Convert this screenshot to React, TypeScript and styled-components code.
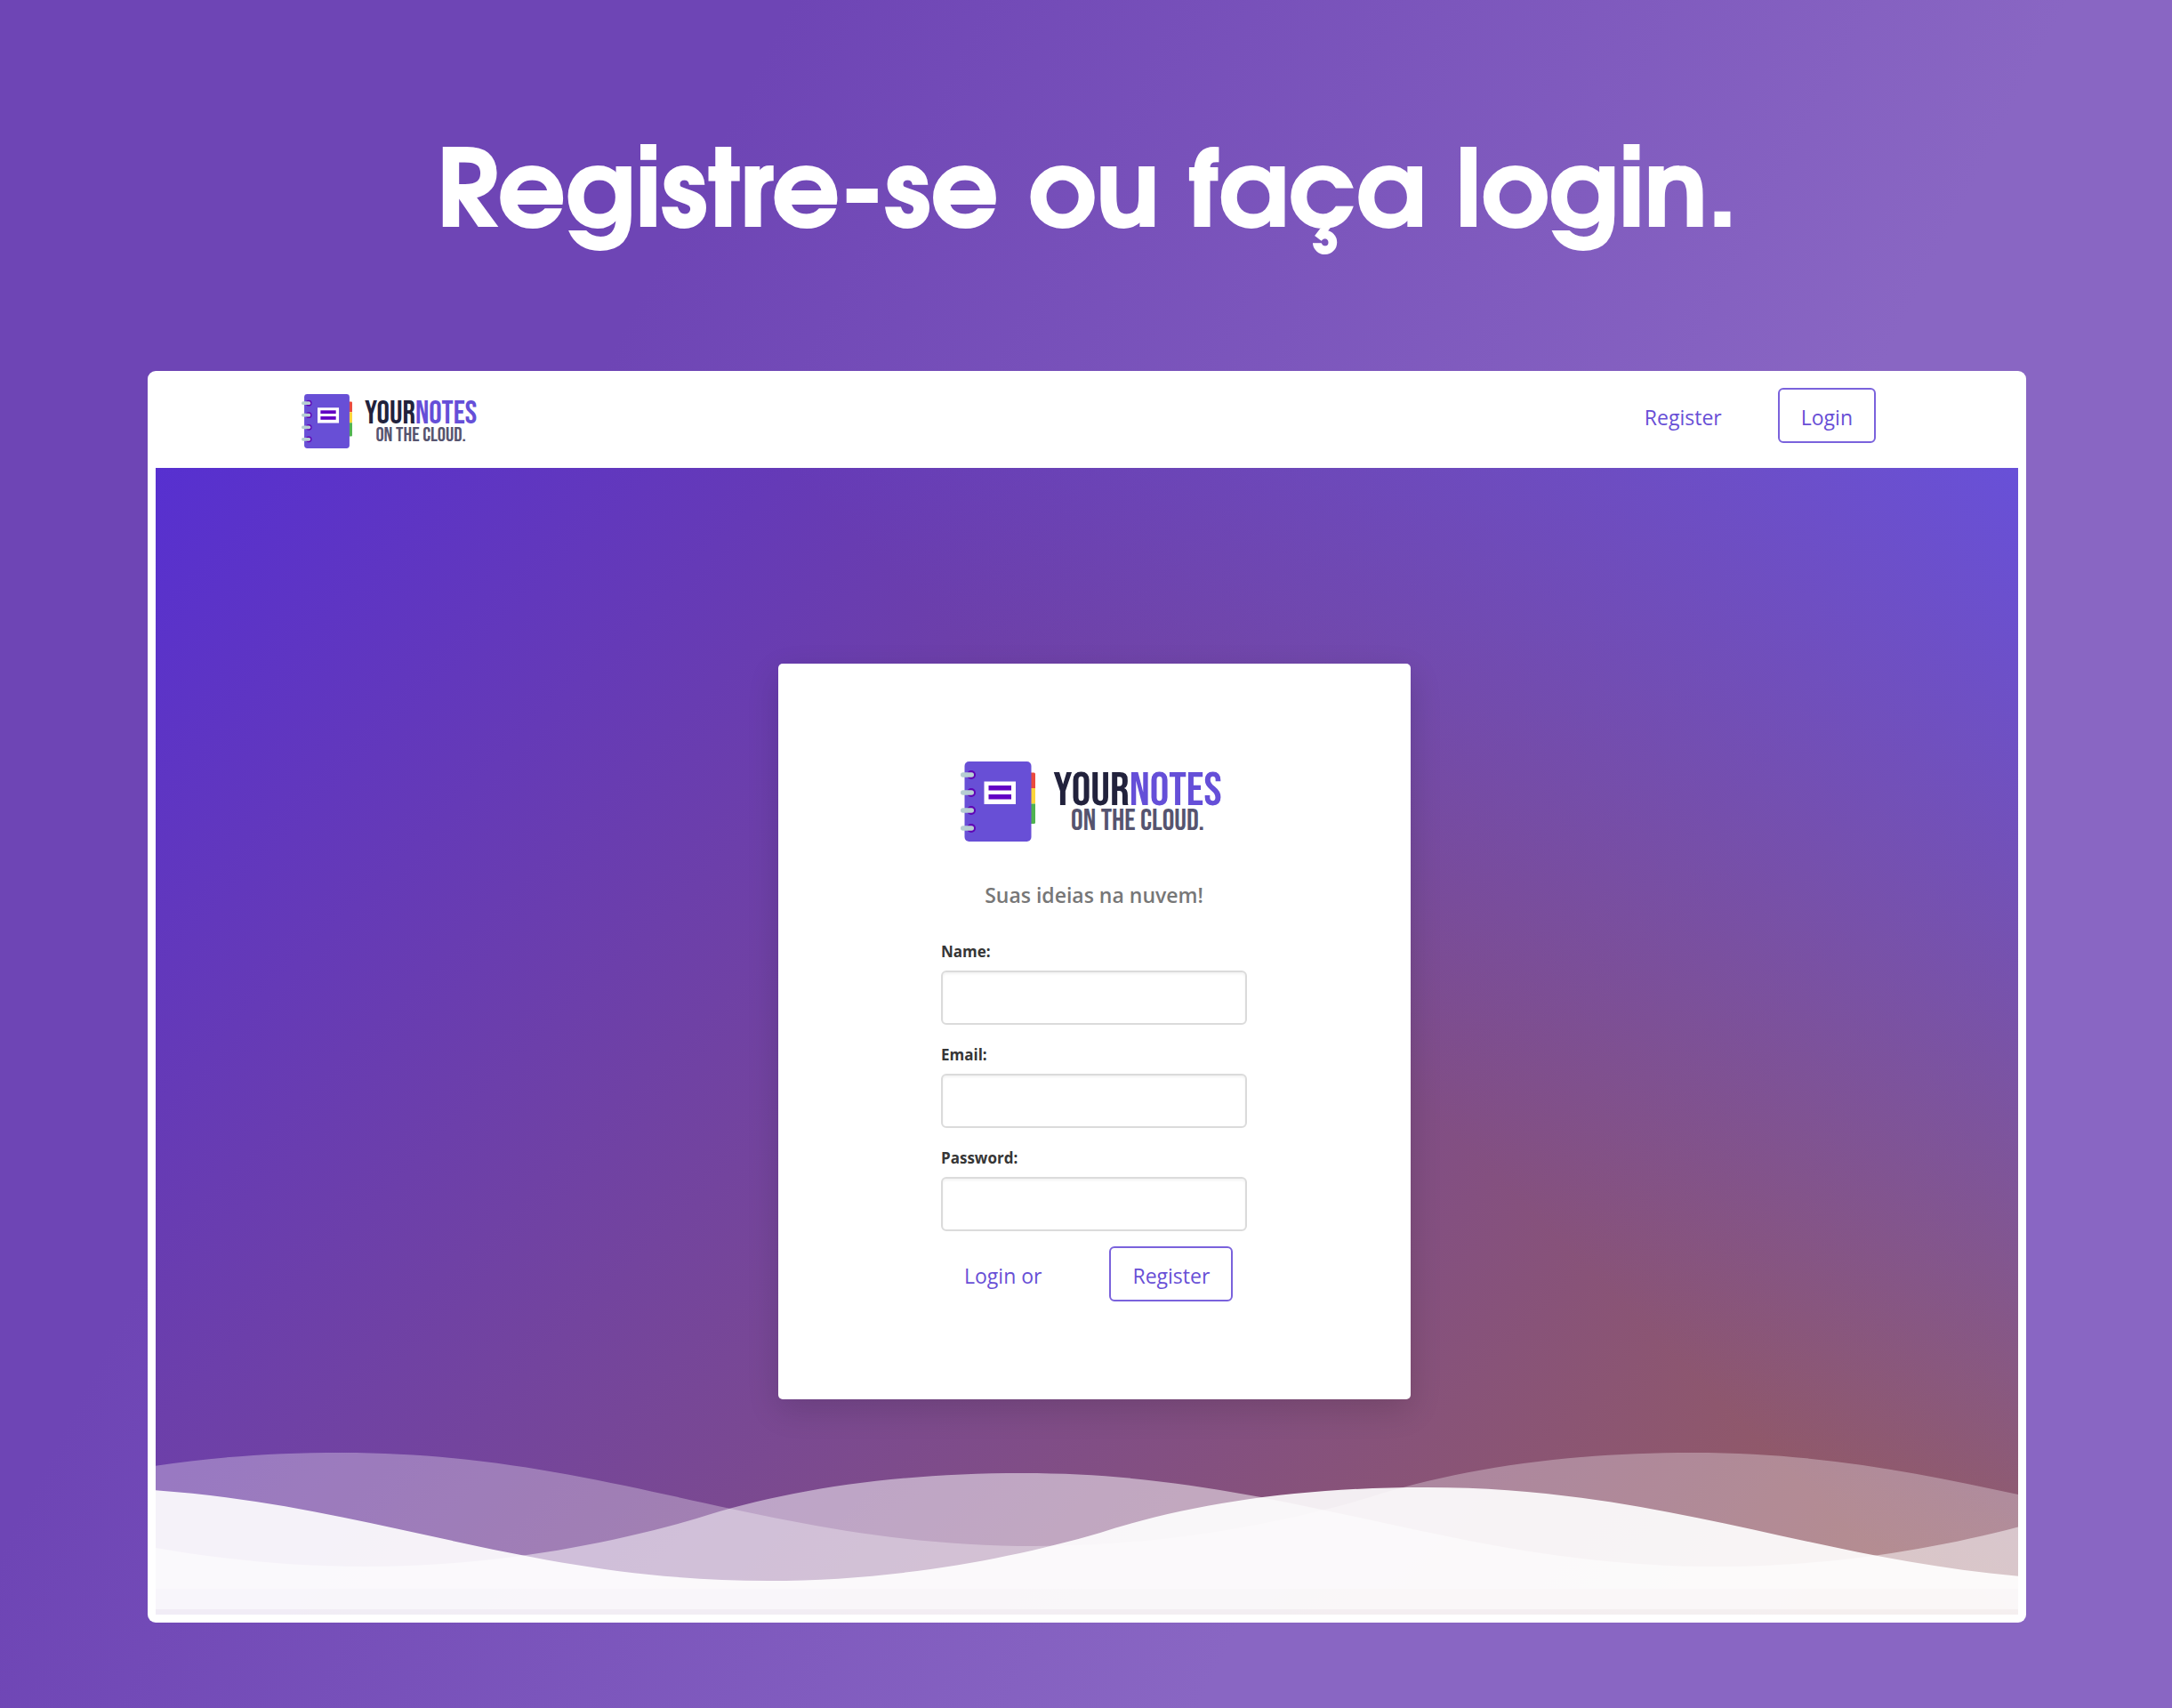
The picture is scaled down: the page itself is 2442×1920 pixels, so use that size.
import React from "react";
import styled, { createGlobalStyle } from "styled-components";

const violet = "#684fd6";

const GlobalStyle = createGlobalStyle`
  *, *::before, *::after { box-sizing: border-box; }
  body {
    margin: 0;
    font-family: "Segoe UI", "Open Sans", "Noto Sans", sans-serif;
    color: #212529;
  }
`;

const Page = styled.main`
  min-height: 100vh;
  display: flex;
  flex-direction: column;
  padding: 145px 164px 96px 166px;
  background: linear-gradient(117deg, #6e45b5 26%, #8966c3 68%);
`;

const Headline = styled.h1`
  margin: 0 0 120px;
  font: 700 119px/152px "Century Gothic", "TeX Gyre Adventor", "Poppins", sans-serif;
  color: #fff;
  -webkit-text-stroke: 2px #fff;
  text-align: center;
`;

const Window = styled.div`
  padding: 0 9px 9px;
  border-radius: 9px;
  background: #fff;
`;

const Navbar = styled.header`
  display: flex;
  align-items: flex-start;
  justify-content: space-between;
  padding: 19px 160px 22px 164px;
`;

const NavLogo = styled.a`
  padding-top: 7px;
  text-decoration: none;
`;

const NavActions = styled.nav`
  display: flex;
  gap: 37px;
`;

const Button = styled.button<{ $outlined?: boolean }>`
  height: 62px;
  padding: 4px 24px 0;
  border: 2px solid ${(p) => (p.$outlined ? "#7a62dc" : "transparent")};
  border-radius: 6px;
  background: transparent;
  color: ${violet};
  font: inherit;
  font-size: 23px;
  line-height: 32px;
  cursor: pointer;
`;

const Hero = styled.section`
  position: relative;
  display: flex;
  justify-content: center;
  padding: 220px 0 242px 17px;
  background:
    linear-gradient(225deg, #6850d8 0%, rgba(104, 80, 216, 0) 41%),
    linear-gradient(135deg, #5730d0, #995f5a);
`;

const WaveArt = styled.svg`
  position: absolute;
  left: 0;
  bottom: 0;
  width: 100%;
  height: 190px;
`;

const Card = styled.form`
  position: relative;
  display: flex;
  flex-direction: column;
  width: 711px;
  padding: 110px 184px 110px 183px;
  border-radius: 5px;
  background: #fff;
  box-shadow: 0 12px 36px rgba(0, 0, 0, 0.14);
`;

const CardLogo = styled.div`
  display: flex;
  justify-content: center;
  padding-right: 6px;
`;

const Tagline = styled.p`
  margin: 44px 0 36px;
  font-size: 23px;
  line-height: 32px;
  font-weight: 600;
  color: #777;
  text-align: center;
`;

const Field = styled.div`
  display: flex;
  flex-direction: column;
  gap: 9px;
  margin-bottom: 22px;

  &:last-of-type { margin-bottom: 0; }
`;

const Label = styled.label`
  font-size: 17px;
  line-height: 24px;
  font-weight: 700;
  color: #363636;
`;

const TextInput = styled.input`
  width: 100%;
  height: 61px;
  padding: 0 16px;
  border: 2px solid #dbdbdb;
  border-radius: 6px;
  box-shadow: inset 0 2px 3px rgba(10, 10, 10, 0.05);
  font: inherit;
  font-size: 23px;
`;

const Fields = styled.div`
  margin-bottom: 17px;
`;

const Actions = styled.div`
  display: flex;
  gap: 50px;
`;

const LogoRow = styled.span<{ $large?: boolean }>`
  display: flex;
  align-items: flex-start;
  gap: ${(p) => (p.$large ? 20 : 14)}px;
  font-family: "Bebas Neue", "Oswald", sans-serif;
  text-align: center;
`;

const BookIcon = styled.svg<{ $large?: boolean }>`
  flex: none;
  width: ${(p) => (p.$large ? 84 : 57)}px;
  height: ${(p) => (p.$large ? 90 : 61)}px;
`;

const Wordmark = styled.span<{ $large?: boolean }>`
  display: flex;
  flex-direction: column;
  padding-top: ${(p) => (p.$large ? 12 : 9)}px;
`;

const BrandName = styled.span<{ $large?: boolean }>`
  font-size: ${(p) => (p.$large ? 54 : 36)}px;
  line-height: ${(p) => (p.$large ? 42 : 28)}px;
  color: #22223c;
`;

const BrandAccent = styled.span`
  color: #654fd8;
`;

const BrandLine = styled.span<{ $large?: boolean }>`
  font-size: ${(p) => (p.$large ? 34 : 23)}px;
  line-height: ${(p) => (p.$large ? 26 : 18)}px;
  color: #56546f;
`;

const ringRows = [15, 35, 55, 75];

function Logo({ large }: { large?: boolean }) {
  return (
    <LogoRow $large={large}>
      <BookIcon $large={large} viewBox="0 0 84 90" aria-hidden="true">
        <path d="M78 12.5h4.5q1.5 0 1.5 1.5v16h-6z" fill="#ea4a3d" />
        <path d="M78 30h6v17.500h-6z" fill="#fcd53a" />
        <path d="M78 47.500h6v21q0 1.500-1.500 1.500h-4.500z" fill="#4fb350" />
        <rect x="4.500" width="75" height="90" rx="5" fill="#684fd6" />
        {ringRows.map((y) => (
          <g key={y}>
            <circle cx="12" cy={y} r="5" fill="#5f04b6" />
            <rect x="0" y={y - 2.75} width="15" height="5.500" rx="2.750" fill="#b7cfd2" />
          </g>
        ))}
        <rect x="26.500" y="22.500" width="35.500" height="25.500" fill="#fff" />
        <rect x="31.500" y="27" width="25.500" height="5.500" fill="#6202c4" />
        <rect x="31.500" y="37" width="25.500" height="5.500" fill="#6202c4" />
      </BookIcon>
      <Wordmark $large={large}>
        <BrandName $large={large}>
          YOUR<BrandAccent>NOTES</BrandAccent>
        </BrandName>
        <BrandLine $large={large}>ON THE CLOUD.</BrandLine>
      </Wordmark>
    </LogoRow>
  );
}

const fall = "c300 0 480 105 780 105";
const rise = "c140 0 270 -24 373 -54c100 -32 220 -51 367 -51";

const layers = [
  { x: -1311, y: 8, base: 161, opacity: 0.3 },
  { x: -545, y: 31, base: 184, opacity: 0.5 },
  { x: -91, y: 47, base: 190, opacity: 0.9 },
];

function Waves() {
  return (
    <WaveArt viewBox="0 0 2094 190" preserveAspectRatio="none" aria-hidden="true">
      {layers.map((l) => (
        <path
          key={l.x}
          d={`M${l.x} ${l.y}${fall}${rise}${fall}${rise}${fall}V${l.base}H${l.x}z`}
          fill="#fff"
          fillOpacity={l.opacity}
        />
      ))}
    </WaveArt>
  );
}

const fields = [
  { id: "name", label: "Name:", type: "text" },
  { id: "email", label: "Email:", type: "email" },
  { id: "password", label: "Password:", type: "password" },
];

export default function App() {
  return (
    <>
      <GlobalStyle />
      <Page>
        <Headline>Registre-se ou faça login.</Headline>
        <Window>
          <Navbar>
            <NavLogo href="#">
              <Logo />
            </NavLogo>
            <NavActions>
              <Button type="button">Register</Button>
              <Button type="button" $outlined>Login</Button>
            </NavActions>
          </Navbar>
          <Hero>
            <Waves />
            <Card onSubmit={(e) => e.preventDefault()}>
              <CardLogo>
                <Logo large />
              </CardLogo>
              <Tagline>Suas ideias na nuvem!</Tagline>
              <Fields>
                {fields.map((f) => (
                  <Field key={f.id}>
                    <Label htmlFor={f.id}>{f.label}</Label>
                    <TextInput id={f.id} name={f.id} type={f.type} />
                  </Field>
                ))}
              </Fields>
              <Actions>
                <Button type="button">Login or</Button>
                <Button type="submit" $outlined>Register</Button>
              </Actions>
            </Card>
          </Hero>
        </Window>
      </Page>
    </>
  );
}
